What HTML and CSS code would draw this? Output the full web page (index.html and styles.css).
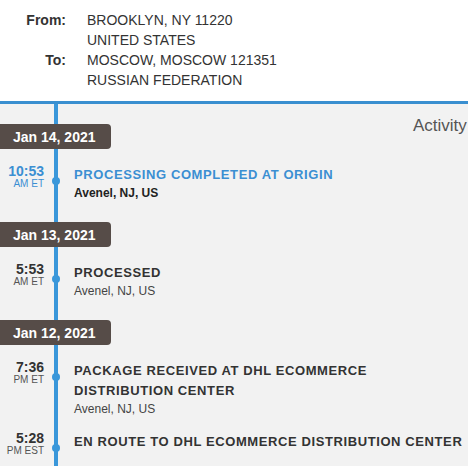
FILE: index.html
```html
<!DOCTYPE html>
<html lang="en">
<head>
<meta charset="utf-8">
<title>Tracking</title>
<link rel="stylesheet" href="styles.css">
</head>
<body>
<div class="addr">
  <div class="label">From:</div>
  <div class="val">BROOKLYN, NY 11220<br>UNITED STATES</div>
  <div class="label">To:</div>
  <div class="val">MOSCOW, MOSCOW 121351<br>RUSSIAN FEDERATION</div>
</div>
<div class="timeline">
  <div class="day">
    <div class="day-head">
      <div class="badge">Jan 14, 2021</div>
      <div class="activity">Activity</div>
    </div>
    <div class="events">
      <div class="event current">
        <div class="time"><div class="clock">10:53</div><div class="zone">AM ET</div></div>
        <div class="mark"><span class="dot"></span></div>
        <div class="info"><div class="title">PROCESSING COMPLETED AT ORIGIN</div><div class="loc">Avenel, NJ, US</div></div>
      </div>
    </div>
  </div>
  <div class="day">
    <div class="day-head">
      <div class="badge">Jan 13, 2021</div>
    </div>
    <div class="events">
      <div class="event">
        <div class="time"><div class="clock">5:53</div><div class="zone">AM ET</div></div>
        <div class="mark"><span class="dot"></span></div>
        <div class="info"><div class="title">PROCESSED</div><div class="loc">Avenel, NJ, US</div></div>
      </div>
    </div>
  </div>
  <div class="day">
    <div class="day-head">
      <div class="badge">Jan 12, 2021</div>
    </div>
    <div class="events">
      <div class="event">
        <div class="time"><div class="clock">7:36</div><div class="zone">PM ET</div></div>
        <div class="mark"><span class="dot"></span></div>
        <div class="info"><div class="title">PACKAGE RECEIVED AT DHL ECOMMERCE DISTRIBUTION CENTER</div><div class="loc">Avenel, NJ, US</div></div>
      </div>
      <div class="event">
        <div class="time"><div class="clock">5:28</div><div class="zone">PM EST</div></div>
        <div class="mark"><span class="dot"></span></div>
        <div class="info"><div class="title">EN ROUTE TO DHL ECOMMERCE DISTRIBUTION CENTER</div></div>
      </div>
    </div>
  </div>
</div>
</body>
</html>
```
FILE: styles.css
```css
html, body {
  margin: 0;
  padding: 0;
  background: #f2f2f2;
}
body {
  width: 468px;
  height: 466px;
  overflow: hidden;
  font-family: "Liberation Sans", Arial, sans-serif;
  color: #333;
}
.addr {
  background: #fff;
  display: grid;
  grid-template-columns: 66px 1fr;
  column-gap: 21px;
  padding: 10px 0 11px;
  font-size: 14px;
  line-height: 20px;
  border-bottom: 3px solid #3a8fd0;
}
.label {
  text-align: right;
  font-weight: bold;
  color: #333;
}
.val {
  color: #333;
}
.timeline {
  background: linear-gradient(#3a97da, #3a97da) no-repeat 54px 0 / 4px 100%, #f2f2f2;
  padding-top: 20px;
  height: 362px;
  box-sizing: border-box;
  overflow: hidden;
}
.day + .day {
  margin-top: 6px;
}
.day-head {
  display: flex;
  align-items: flex-start;
}
.badge {
  width: 111px;
  height: 25px;
  box-sizing: border-box;
  padding-left: 13px;
  background: #564c48;
  border-radius: 0 4px 4px 0;
  color: #fff;
  font-weight: bold;
  font-size: 14px;
  line-height: 26px;
}
.activity {
  margin-left: 302px;
  margin-top: -8px;
  font-size: 17px;
  line-height: 20px;
  color: #555;
  white-space: nowrap;
}
.events {
  padding-top: 16px;
}
.event {
  display: flex;
  padding-bottom: 15px;
}
.time {
  width: 44px;
  flex: none;
  text-align: right;
}
.clock {
  font-size: 14px;
  font-weight: bold;
  line-height: 13px;
  color: #333;
}
.zone {
  font-size: 10px;
  line-height: 11px;
  color: #555;
}
.current .clock,
.current .zone,
.current .title {
  color: #3b8fd2;
}
.mark {
  width: 30px;
  flex: none;
}
.dot {
  display: block;
  width: 8px;
  height: 8px;
  margin: 12px 0 0 8px;
  border-radius: 50%;
  background: #3a97da;
}
.info {
  flex: 1;
  min-width: 0;
}
.title {
  font-size: 13px;
  font-weight: bold;
  line-height: 20px;
  letter-spacing: 0.6px;
  color: #333;
}
.loc {
  font-size: 12px;
  line-height: 16px;
  color: #444;
}
.current .loc {
  font-weight: bold;
  color: #222;
}
```
